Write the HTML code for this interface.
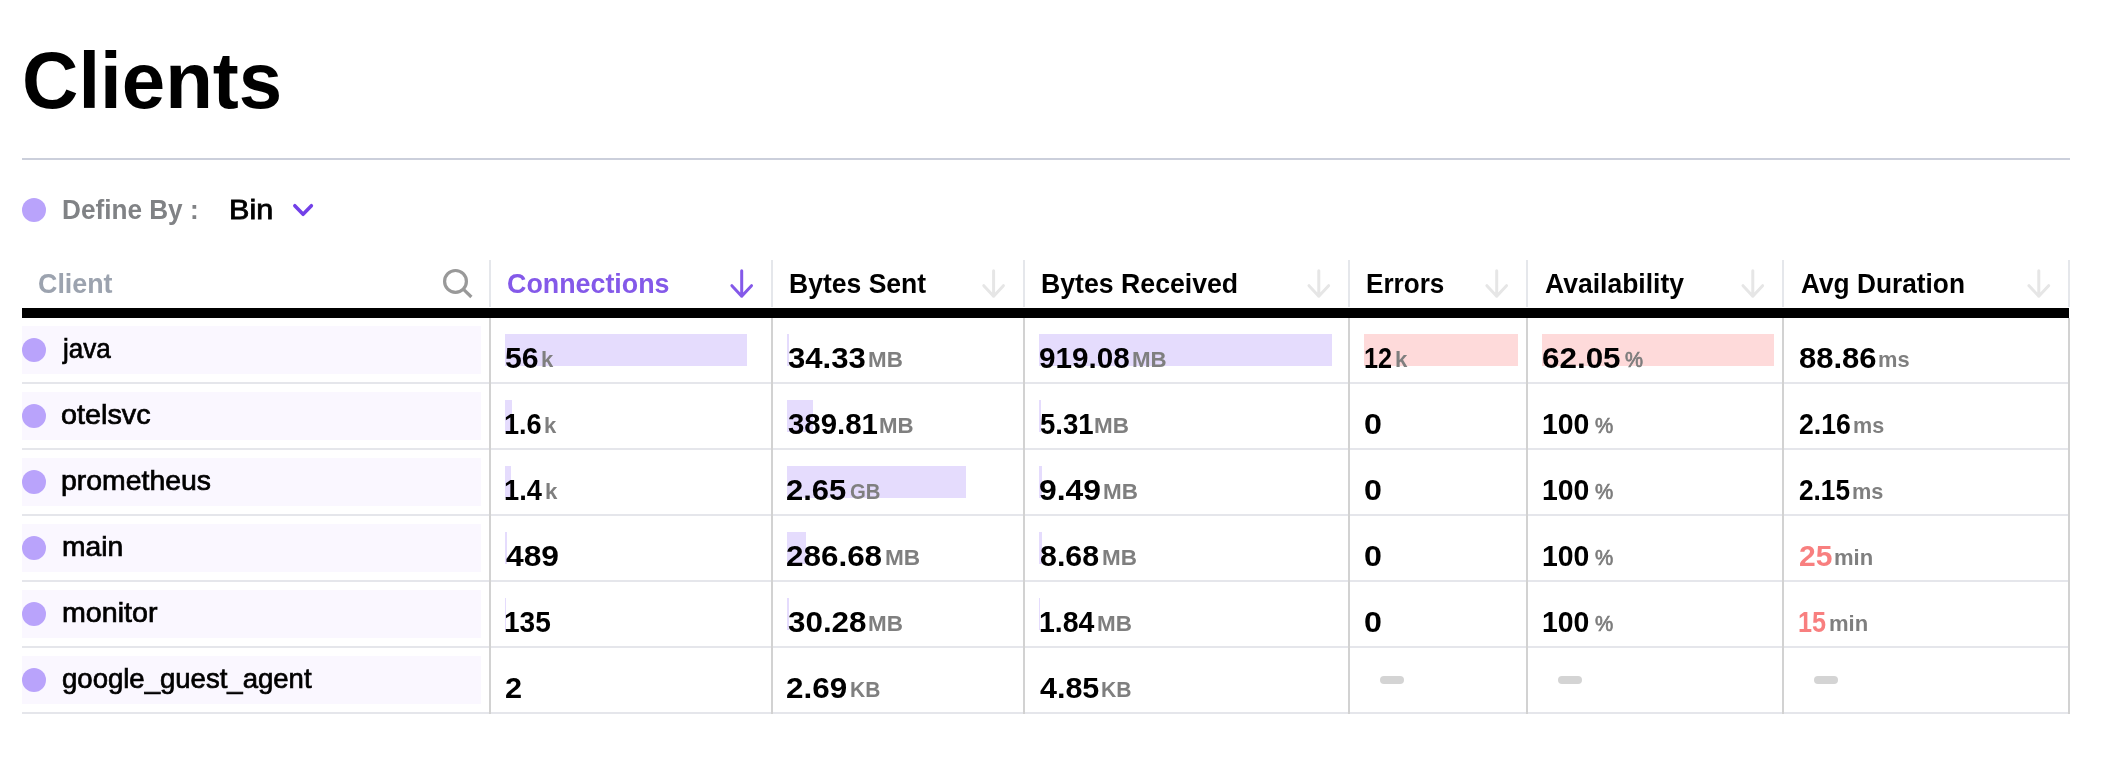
<!DOCTYPE html>
<html lang="en"><head><meta charset="utf-8"><title>Clients</title>
<style>
*{margin:0;padding:0;box-sizing:border-box}
html,body{width:2108px;height:774px;background:#fff;overflow:hidden}
body{position:relative;font-family:"Liberation Sans",sans-serif;color:#000}
.t{position:absolute;white-space:nowrap;line-height:1;display:block;transform-origin:0 0}
h1.t{font-weight:700}
.app{position:absolute;left:0;top:0;width:2108px;height:774px;will-change:transform}
hr.rule{position:absolute;left:22px;top:158px;width:2048px;height:2px;border:0;background:#cbcfdb}
.dot{position:absolute;width:24px;height:24px;border-radius:50%;background:#b9a3fb}
.vh{position:absolute;top:260px;width:2px;height:47px;background:#e5e7eb}
.vb{position:absolute;top:318px;width:2px;height:396px;background:#d2d2d2}
.hl{position:absolute;left:22px;width:2048px;height:2px;background:#e5e6eb}
.bar{position:absolute;left:22px;top:308px;width:2047px;height:10px;background:#000}
.cbg{position:absolute;left:22px;width:459px;height:48px;background:#faf7ff}
.pb{position:absolute;height:32px;background:#e5dcfd}
.rb{position:absolute;height:32px;background:#fedada}
.pill{position:absolute;width:24px;height:8px;border-radius:4px;background:#d4d4d4}
svg{position:absolute;overflow:visible}
</style></head>
<body><main class="app">
<h1 class="t" style="left:21.97px;top:40.98px;font-size:80px;font-weight:700;color:#000;transform:scaleX(0.9758);">Clients</h1>
<hr class="rule">
<div class="dot" style="left:22px;top:198px"></div>
<span class="t" style="left:62.14px;top:195.88px;font-size:27.2px;font-weight:700;color:#808285;transform:scaleX(0.9622);">Define By :</span>
<span class="t" style="left:229.40px;top:196.07px;font-size:27.8px;font-weight:400;color:#000;transform:scaleX(1.1003);-webkit-text-stroke:0.8px #000;">Bin</span>
<svg style="left:0;top:0" width="2108" height="774" viewBox="0 0 2108 774" fill="none" stroke-linecap="round" stroke-linejoin="round">
<path d="M294.8 205.7 L303.1 214.3 L311.4 205.7" stroke="#7240e8" stroke-width="3.5"/>
<circle cx="455.5" cy="281.4" r="10.9" stroke="#999" stroke-width="3.2"/><path d="M463.5 289.3 L471.4 297" stroke="#999" stroke-width="3.2" stroke-linecap="butt"/>
<path d="M741.7 270.8 V296.2 M731.9 285.7 L741.7 296.2 L751.5 285.7" stroke="#8459e9" stroke-width="3"/>
<path d="M993.6 270.8 V296.2 M983.8 285.7 L993.6 296.2 L1003.4 285.7" stroke="#e6e6e6" stroke-width="3"/>
<path d="M1318.8 270.8 V296.2 M1309.0 285.7 L1318.8 296.2 L1328.6 285.7" stroke="#e6e6e6" stroke-width="3"/>
<path d="M1496.7 270.8 V296.2 M1486.9 285.7 L1496.7 296.2 L1506.5 285.7" stroke="#e6e6e6" stroke-width="3"/>
<path d="M1752.8 270.8 V296.2 M1743.0 285.7 L1752.8 296.2 L1762.6 285.7" stroke="#e6e6e6" stroke-width="3"/>
<path d="M2038.8 270.8 V296.2 M2029.0 285.7 L2038.8 296.2 L2048.6 285.7" stroke="#e6e6e6" stroke-width="3"/>
</svg>
<span class="t" style="left:37.61px;top:269.68px;font-size:27.2px;font-weight:700;color:#9ca3af;transform:scaleX(0.9870);">Client</span>
<span class="t" style="left:506.51px;top:269.68px;font-size:27.2px;font-weight:700;color:#8459e9;transform:scaleX(0.9870);">Connections</span>
<span class="t" style="left:788.92px;top:269.68px;font-size:27.2px;font-weight:700;color:#000;transform:scaleX(0.9759);">Bytes Sent</span>
<span class="t" style="left:1040.72px;top:269.68px;font-size:27.2px;font-weight:700;color:#000;transform:scaleX(0.9809);">Bytes Received</span>
<span class="t" style="left:1365.54px;top:269.68px;font-size:27.2px;font-weight:700;color:#000;transform:scaleX(0.9600);">Errors</span>
<span class="t" style="left:1545.00px;top:269.68px;font-size:27.2px;font-weight:700;color:#000;transform:scaleX(0.9753);">Availability</span>
<span class="t" style="left:1801.10px;top:269.68px;font-size:27.2px;font-weight:700;color:#000;transform:scaleX(0.9663);">Avg Duration</span>
<div class="vh" style="left:489px"></div>
<div class="vh" style="left:771px"></div>
<div class="vh" style="left:1023px"></div>
<div class="vh" style="left:1348px"></div>
<div class="vh" style="left:1526px"></div>
<div class="vh" style="left:1782px"></div>
<div class="vh" style="left:2068px"></div>
<div class="bar"></div>
<div class="cbg" style="top:326px"></div>
<div class="dot" style="left:22px;top:338px"></div>
<div class="cbg" style="top:392px"></div>
<div class="dot" style="left:22px;top:404px"></div>
<div class="cbg" style="top:458px"></div>
<div class="dot" style="left:22px;top:470px"></div>
<div class="cbg" style="top:524px"></div>
<div class="dot" style="left:22px;top:536px"></div>
<div class="cbg" style="top:590px"></div>
<div class="dot" style="left:22px;top:602px"></div>
<div class="cbg" style="top:656px"></div>
<div class="dot" style="left:22px;top:668px"></div>
<div class="pb" style="left:505px;top:334px;width:242px"></div>
<div class="pb" style="left:787px;top:334px;width:2px"></div>
<div class="pb" style="left:1039px;top:334px;width:293px"></div>
<div class="rb" style="left:1364px;top:334px;width:154px"></div>
<div class="rb" style="left:1542px;top:334px;width:232px"></div>
<div class="pb" style="left:505px;top:400px;width:7px"></div>
<div class="pb" style="left:787px;top:400px;width:26px"></div>
<div class="pb" style="left:1039px;top:400px;width:2px"></div>
<div class="pb" style="left:505px;top:466px;width:6px"></div>
<div class="pb" style="left:787px;top:466px;width:179px"></div>
<div class="pb" style="left:1039px;top:466px;width:2.6px"></div>
<div class="pb" style="left:505px;top:532px;width:1.6px"></div>
<div class="pb" style="left:787px;top:532px;width:19px"></div>
<div class="pb" style="left:1039px;top:532px;width:2.5px"></div>
<div class="pb" style="left:505px;top:598px;width:1px"></div>
<div class="pb" style="left:787px;top:598px;width:1.6px"></div>
<div class="pb" style="left:1039px;top:598px;width:1px"></div>
<div class="hl" style="top:382px"></div>
<div class="hl" style="top:448px"></div>
<div class="hl" style="top:514px"></div>
<div class="hl" style="top:580px"></div>
<div class="hl" style="top:646px"></div>
<div class="hl" style="top:712px"></div>
<div class="vb" style="left:489px"></div>
<div class="vb" style="left:771px"></div>
<div class="vb" style="left:1023px"></div>
<div class="vb" style="left:1348px"></div>
<div class="vb" style="left:1526px"></div>
<div class="vb" style="left:1782px"></div>
<div class="vb" style="left:2068px"></div>
<div class="pill" style="left:1380px;top:676px"></div>
<div class="pill" style="left:1558px;top:676px"></div>
<div class="pill" style="left:1814px;top:676px"></div>
<span class="t" style="left:63.24px;top:335.39px;font-size:27.6px;font-weight:400;color:#000;transform:scaleX(0.9431);-webkit-text-stroke:0.7px #000;">java</span>
<span class="t" style="left:61.46px;top:401.39px;font-size:27.6px;font-weight:400;color:#000;transform:scaleX(1.0425);-webkit-text-stroke:0.7px #000;">otelsvc</span>
<span class="t" style="left:61.47px;top:467.39px;font-size:27.6px;font-weight:400;color:#000;transform:scaleX(1.0291);-webkit-text-stroke:0.7px #000;">prometheus</span>
<span class="t" style="left:61.68px;top:533.39px;font-size:27.6px;font-weight:400;color:#000;transform:scaleX(1.0233);-webkit-text-stroke:0.7px #000;">main</span>
<span class="t" style="left:61.66px;top:599.39px;font-size:27.6px;font-weight:400;color:#000;transform:scaleX(1.0372);-webkit-text-stroke:0.7px #000;">monitor</span>
<span class="t" style="left:61.70px;top:665.39px;font-size:27.6px;font-weight:400;color:#000;transform:scaleX(0.9978);-webkit-text-stroke:0.7px #000;">google_guest_agent</span>
<span class="t" style="left:505.30px;top:343.20px;font-size:29.3px;font-weight:700;color:#000;transform:scaleX(1.0312);">56</span>
<span class="t" style="left:541.17px;top:349.80px;font-size:21.5px;font-weight:700;color:#7f7f7f;transform:scaleX(1.0273);">k</span>
<span class="t" style="left:788.00px;top:343.20px;font-size:29.3px;font-weight:700;color:#000;transform:scaleX(1.0613);">34.33</span>
<span class="t" style="left:867.76px;top:349.80px;font-size:21.5px;font-weight:700;color:#7f7f7f;transform:scaleX(1.0404);">MB</span>
<span class="t" style="left:1038.99px;top:343.20px;font-size:29.3px;font-weight:700;color:#000;transform:scaleX(1.0123);">919.08</span>
<span class="t" style="left:1131.86px;top:349.80px;font-size:21.5px;font-weight:700;color:#7f7f7f;transform:scaleX(1.0373);">MB</span>
<span class="t" style="left:1364.14px;top:343.20px;font-size:29.3px;font-weight:700;color:#000;transform:scaleX(0.8600);">12</span>
<span class="t" style="left:1394.66px;top:349.80px;font-size:21.5px;font-weight:700;color:#7f7f7f;transform:scaleX(1.0364);">k</span>
<span class="t" style="left:1541.63px;top:343.20px;font-size:29.3px;font-weight:700;color:#000;transform:scaleX(1.0719);">62.05</span>
<span class="t" style="left:1625.30px;top:349.80px;font-size:21.5px;font-weight:400;color:#7c7c7c;transform:scaleX(0.9421);-webkit-text-stroke:0.7px #7c7c7c;">%</span>
<span class="t" style="left:1799.30px;top:343.20px;font-size:29.3px;font-weight:700;color:#000;transform:scaleX(1.0572);">88.86</span>
<span class="t" style="left:1878.48px;top:349.80px;font-size:21.5px;font-weight:700;color:#7f7f7f;transform:scaleX(1.0160);">ms</span>
<span class="t" style="left:504.07px;top:409.20px;font-size:29.3px;font-weight:700;color:#000;transform:scaleX(0.9256);">1.6</span>
<span class="t" style="left:543.97px;top:415.80px;font-size:21.5px;font-weight:700;color:#7f7f7f;transform:scaleX(1.0273);">k</span>
<span class="t" style="left:787.50px;top:409.20px;font-size:29.3px;font-weight:700;color:#000;transform:scaleX(1.0032);">389.81</span>
<span class="t" style="left:879.47px;top:415.80px;font-size:21.5px;font-weight:700;color:#7f7f7f;transform:scaleX(1.0342);">MB</span>
<span class="t" style="left:1040.00px;top:409.20px;font-size:29.3px;font-weight:700;color:#000;transform:scaleX(0.9414);">5.31</span>
<span class="t" style="left:1094.36px;top:415.80px;font-size:21.5px;font-weight:700;color:#7f7f7f;transform:scaleX(1.0436);">MB</span>
<span class="t" style="left:1363.90px;top:409.20px;font-size:29.3px;font-weight:700;color:#000;transform:scaleX(1.1000);">0</span>
<span class="t" style="left:1542.13px;top:409.20px;font-size:29.3px;font-weight:700;color:#000;transform:scaleX(0.9688);">100</span>
<span class="t" style="left:1594.60px;top:415.80px;font-size:21.5px;font-weight:400;color:#7c7c7c;transform:scaleX(0.9526);-webkit-text-stroke:0.7px #7c7c7c;">%</span>
<span class="t" style="left:1798.89px;top:409.20px;font-size:29.3px;font-weight:700;color:#000;transform:scaleX(0.9080);">2.16</span>
<span class="t" style="left:1853.40px;top:415.80px;font-size:21.5px;font-weight:700;color:#7f7f7f;transform:scaleX(1.0028);">ms</span>
<span class="t" style="left:504.07px;top:475.20px;font-size:29.3px;font-weight:700;color:#000;transform:scaleX(0.9299);">1.4</span>
<span class="t" style="left:544.96px;top:481.80px;font-size:21.5px;font-weight:700;color:#7f7f7f;transform:scaleX(1.0364);">k</span>
<span class="t" style="left:786.44px;top:475.20px;font-size:29.3px;font-weight:700;color:#000;transform:scaleX(1.0569);">2.65</span>
<span class="t" style="left:850.00px;top:481.80px;font-size:21.5px;font-weight:700;color:#7f7f7f;transform:scaleX(0.9457);">GB</span>
<span class="t" style="left:1038.91px;top:475.20px;font-size:29.3px;font-weight:700;color:#000;transform:scaleX(1.0875);">9.49</span>
<span class="t" style="left:1102.96px;top:481.80px;font-size:21.5px;font-weight:700;color:#7f7f7f;transform:scaleX(1.0436);">MB</span>
<span class="t" style="left:1363.90px;top:475.20px;font-size:29.3px;font-weight:700;color:#000;transform:scaleX(1.1000);">0</span>
<span class="t" style="left:1542.13px;top:475.20px;font-size:29.3px;font-weight:700;color:#000;transform:scaleX(0.9688);">100</span>
<span class="t" style="left:1594.60px;top:481.80px;font-size:21.5px;font-weight:400;color:#7c7c7c;transform:scaleX(0.9526);-webkit-text-stroke:0.7px #7c7c7c;">%</span>
<span class="t" style="left:1798.91px;top:475.20px;font-size:29.3px;font-weight:700;color:#000;transform:scaleX(0.8936);">2.15</span>
<span class="t" style="left:1852.29px;top:481.80px;font-size:21.5px;font-weight:700;color:#7f7f7f;transform:scaleX(1.0094);">ms</span>
<span class="t" style="left:505.60px;top:541.20px;font-size:29.3px;font-weight:700;color:#000;transform:scaleX(1.0847);">489</span>
<span class="t" style="left:786.43px;top:541.20px;font-size:29.3px;font-weight:700;color:#000;transform:scaleX(1.0723);">286.68</span>
<span class="t" style="left:884.55px;top:547.80px;font-size:21.5px;font-weight:700;color:#7f7f7f;transform:scaleX(1.0530);">MB</span>
<span class="t" style="left:1040.00px;top:541.20px;font-size:29.3px;font-weight:700;color:#000;transform:scaleX(1.0365);">8.68</span>
<span class="t" style="left:1101.56px;top:547.80px;font-size:21.5px;font-weight:700;color:#7f7f7f;transform:scaleX(1.0436);">MB</span>
<span class="t" style="left:1363.90px;top:541.20px;font-size:29.3px;font-weight:700;color:#000;transform:scaleX(1.1000);">0</span>
<span class="t" style="left:1542.13px;top:541.20px;font-size:29.3px;font-weight:700;color:#000;transform:scaleX(0.9688);">100</span>
<span class="t" style="left:1594.60px;top:547.80px;font-size:21.5px;font-weight:400;color:#7c7c7c;transform:scaleX(0.9526);-webkit-text-stroke:0.7px #7c7c7c;">%</span>
<span class="t" style="left:1798.77px;top:541.20px;font-size:29.3px;font-weight:700;color:#f87f7f;transform:scaleX(1.0258);">25</span>
<span class="t" style="left:1834.37px;top:547.80px;font-size:21.5px;font-weight:700;color:#7f7f7f;transform:scaleX(1.0252);">min</span>
<span class="t" style="left:504.04px;top:607.20px;font-size:29.3px;font-weight:700;color:#000;transform:scaleX(0.9582);">135</span>
<span class="t" style="left:787.50px;top:607.20px;font-size:29.3px;font-weight:700;color:#000;transform:scaleX(1.0709);">30.28</span>
<span class="t" style="left:868.36px;top:613.80px;font-size:21.5px;font-weight:700;color:#7f7f7f;transform:scaleX(1.0436);">MB</span>
<span class="t" style="left:1038.53px;top:607.20px;font-size:29.3px;font-weight:700;color:#000;transform:scaleX(0.9713);">1.84</span>
<span class="t" style="left:1096.66px;top:613.80px;font-size:21.5px;font-weight:700;color:#7f7f7f;transform:scaleX(1.0436);">MB</span>
<span class="t" style="left:1363.90px;top:607.20px;font-size:29.3px;font-weight:700;color:#000;transform:scaleX(1.1000);">0</span>
<span class="t" style="left:1542.13px;top:607.20px;font-size:29.3px;font-weight:700;color:#000;transform:scaleX(0.9688);">100</span>
<span class="t" style="left:1594.60px;top:613.80px;font-size:21.5px;font-weight:400;color:#7c7c7c;transform:scaleX(0.9526);-webkit-text-stroke:0.7px #7c7c7c;">%</span>
<span class="t" style="left:1798.04px;top:607.20px;font-size:29.3px;font-weight:700;color:#f87f7f;transform:scaleX(0.8600);">15</span>
<span class="t" style="left:1828.67px;top:613.80px;font-size:21.5px;font-weight:700;color:#7f7f7f;transform:scaleX(1.0252);">min</span>
<span class="t" style="left:504.55px;top:673.20px;font-size:29.3px;font-weight:700;color:#000;transform:scaleX(1.0467);">2</span>
<span class="t" style="left:786.43px;top:673.20px;font-size:29.3px;font-weight:700;color:#000;transform:scaleX(1.0713);">2.69</span>
<span class="t" style="left:849.62px;top:679.80px;font-size:21.5px;font-weight:700;color:#7f7f7f;transform:scaleX(0.9754);">KB</span>
<span class="t" style="left:1040.00px;top:673.20px;font-size:29.3px;font-weight:700;color:#000;transform:scaleX(1.0401);">4.85</span>
<span class="t" style="left:1101.02px;top:679.80px;font-size:21.5px;font-weight:700;color:#7f7f7f;transform:scaleX(0.9822);">KB</span>
</main></body></html>
